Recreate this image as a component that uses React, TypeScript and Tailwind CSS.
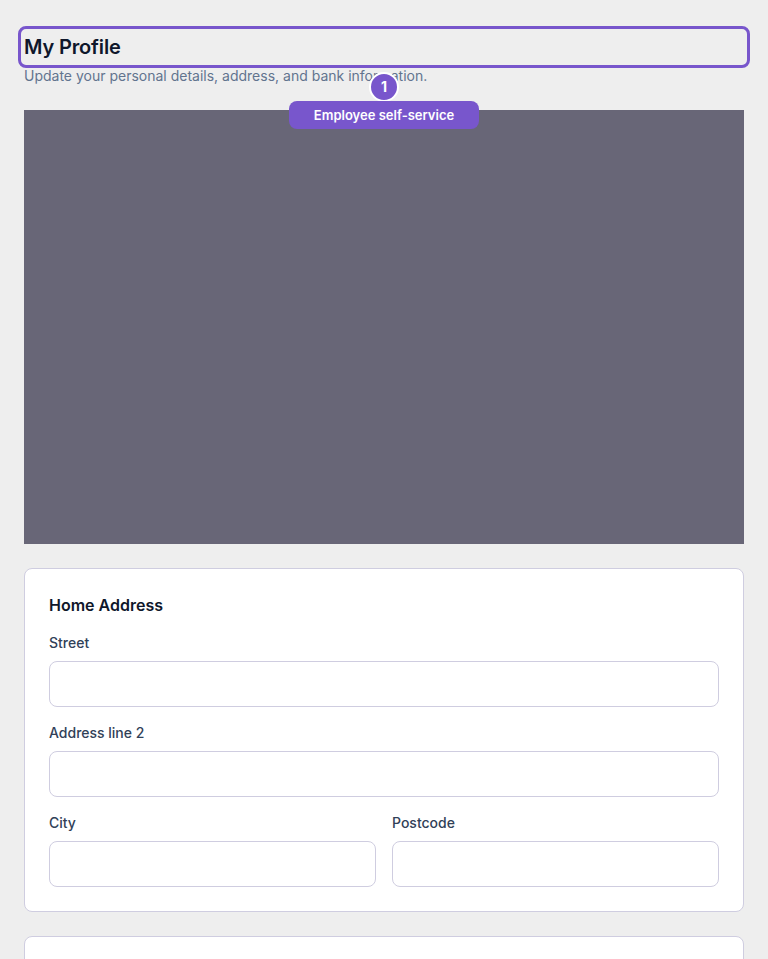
const inputClass =
  'block h-[46px] w-full rounded-lg border border-[#cfcde0] bg-white px-3 text-sm text-slate-900 outline-none';

function Field({ label }: { label: string }) {
  return (
    <div>
      <label className="mb-2 block text-sm leading-5 font-medium text-slate-700">{label}</label>
      <input type="text" className={inputClass} />
    </div>
  );
}

export default function App() {
  return (
    <div
      className="relative h-[959px] overflow-hidden bg-[#eeeeee] px-6 pt-8"
      style={{ fontFamily: "Inter, 'Liberation Sans', sans-serif" }}
    >
      <div className="relative mb-1">
        <h1 className="text-[20px] leading-[30px] font-semibold tracking-[-0.15px] text-slate-900">My Profile</h1>
        <div className="absolute -inset-[6px] rounded-lg border-[3px] border-[#7856cc]" />
      </div>
      <p className="mb-6 text-sm leading-5 text-slate-500">
        Update your personal details, address, and bank information.
      </p>

      {/* tour step badge + label */}
      <div className="absolute top-[72px] left-1/2 z-10 flex -translate-x-1/2 flex-col items-center">
        <div className="flex h-[30px] w-[30px] items-center justify-center rounded-full border-2 border-white bg-[#7856cc] text-sm font-bold text-white">
          1
        </div>
        <div className="mt-[-1px] flex h-7 w-[190px] items-center justify-center rounded-lg bg-[#7856cc] pt-[2px] text-[13px] font-semibold text-white">
          Employee self-service
        </div>
      </div>

      <div className="mb-6 h-[434px] bg-[#686677]" />

      <div className="mb-6 rounded-lg border border-[#cfcde0] bg-white p-6">
        <h2 className="mb-4 text-base leading-6 font-semibold text-slate-900">Home Address</h2>
        <div className="flex flex-col gap-4">
          <Field label="Street" />
          <Field label="Address line 2" />
          <div className="grid grid-cols-2 gap-4">
            <Field label="City" />
            <Field label="Postcode" />
          </div>
        </div>
      </div>

      <div className="h-[240px] rounded-lg border border-[#cfcde0] bg-white" />
    </div>
  );
}
